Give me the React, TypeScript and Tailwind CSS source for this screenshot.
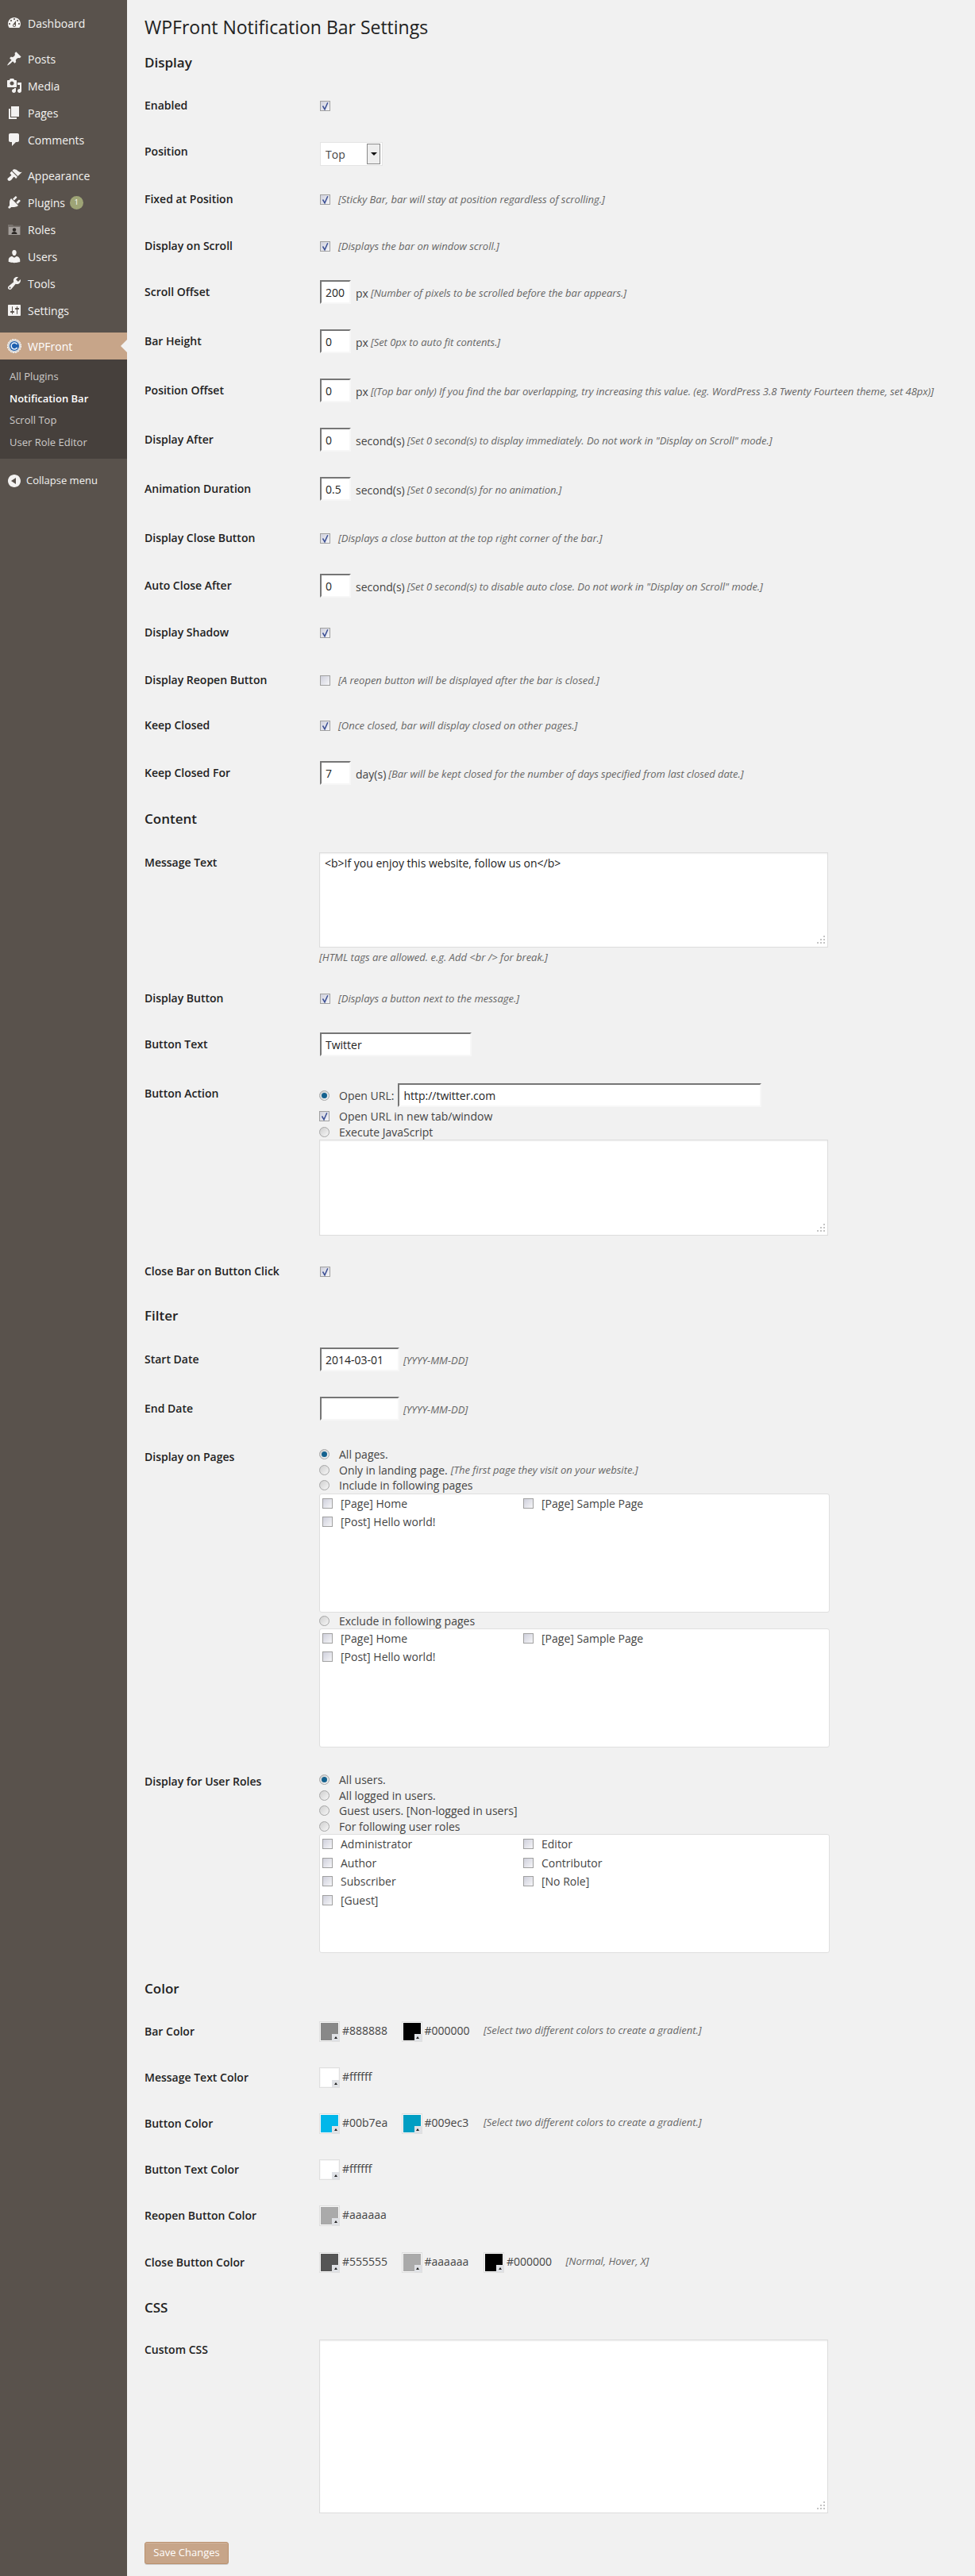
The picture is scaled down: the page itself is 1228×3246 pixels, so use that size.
import React from 'react';

const ICONS: Record<string, string> = {
  dashboard: 'M3.76 16h12.48c1.1-1.37 1.76-3.11 1.76-5 0-4.42-3.58-8-8-8s-8 3.58-8 8c0 1.89.66 3.63 1.76 5zM10 4c.55 0 1 .45 1 1s-.45 1-1 1-1-.45-1-1 .45-1 1-1zM6 6c.55 0 1 .45 1 1s-.45 1-1 1-1-.45-1-1 .45-1 1-1zm8 0c.55 0 1 .45 1 1s-.45 1-1 1-1-.45-1-1 .45-1 1-1zm-5.37 5.55L12 7v6c0 1.1-.9 2-2 2s-2-.9-2-2c0-.57.24-1.08.63-1.45zM4 10c.55 0 1 .45 1 1s-.45 1-1 1-1-.45-1-1 .45-1 1-1zm12 0c.55 0 1 .45 1 1s-.45 1-1 1-1-.45-1-1 .45-1 1-1zm-5 3c0-.55-.45-1-1-1s-1 .45-1 1 .45 1 1 1 1-.45 1-1z',
  posts: 'M10.44 3.02l1.82-1.82 6.36 6.35-1.83 1.82c-1.05-.68-2.48-.57-3.41.36l-.75.75c-.92.93-1.04 2.35-.35 3.41l-1.83 1.82-2.41-2.41-2.8 2.79c-.42.42-3.38 2.71-3.8 2.29s1.86-3.39 2.28-3.81l2.79-2.79L4.1 9.36l1.83-1.82c1.05.69 2.48.57 3.4-.36l.75-.75c.93-.92 1.05-2.35.36-3.41z',
  media: 'M13 11V4c0-.55-.45-1-1-1h-1.67L9 1H5L3.67 3H2c-.55 0-1 .45-1 1v7c0 .55.45 1 1 1h10c.55 0 1-.45 1-1zM7 4.5c1.38 0 2.5 1.12 2.5 2.5S8.38 9.5 7 9.5 4.5 8.38 4.5 7 5.62 4.5 7 4.5zM14 6h5v10.5c0 1.38-1.12 2.5-2.5 2.5S14 17.88 14 16.5s1.12-2.5 2.5-2.5c.17 0 .34.02.5.05V9h-3V6zm-4 8.05V13h2v3.5c0 1.38-1.12 2.5-2.5 2.5S7 17.88 7 16.5 8.12 14 9.5 14c.17 0 .34.02.5.05z',
  pages: 'M6 15V2h10v13H6zm-1 1h8v2H3V5h2v11z',
  comments: 'M5 2h9c1.1 0 2 .9 2 2v7c0 1.1-.9 2-2 2h-2l-5 5v-5H5c-1.1 0-2-.9-2-2V4c0-1.1.9-2 2-2z',
  appearance: 'M14.48 11.06L7.41 3.99l1.5-1.5c.5-.56 2.3-.47 3.51.32 1.21.8 1.43 1.28 2.91 2.1 1.18.64 2.45 1.26 4.45.85zm-.71.71L6.7 4.7 4.93 6.47c-.39.39-.39 1.02 0 1.41l1.06 1.06c.39.39.39 1.03 0 1.42-.6.6-1.43 1.11-2.21 1.69-.35.26-.7.53-1.01.84C1.43 13.23.93 15 2.14 16.21c1.21 1.22 2.98.71 4.32-.63.31-.31.58-.66.84-1.01.58-.78 1.09-1.61 1.69-2.21.39-.39 1.03-.39 1.42 0l1.06 1.06c.39.39 1.02.39 1.41 0z',
  plugins: 'M13.11 4.36L9.87 7.6 8 5.73l3.24-3.24c.35-.34 1.05-.2 1.56.32.52.51.66 1.21.31 1.55zm-8 1.77l.91-1.12 9.01 9.01-1.19.84c-.71.71-2.63 1.16-3.82 1.16H6.14L4.9 17.26c-.59.59-1.54.59-2.12 0-.59-.58-.59-1.53 0-2.12l1.24-1.24v-3.88c0-1.13.4-3.19 1.09-3.89zm7.26 3.97l3.24-3.24c.34-.35 1.04-.21 1.55.31.52.51.66 1.21.31 1.55l-3.24 3.25z',
  users: 'M10 9.25c-2.27 0-2.73-3.44-2.73-3.44C7 4.02 7.82 2 9.97 2c2.16 0 2.98 2.02 2.71 3.81 0 0-.41 3.44-2.68 3.44zm0 2.57L12.72 10c2.39 0 4.52 2.33 4.52 4.53v2.49s-3.65 1.13-7.24 1.13c-3.65 0-7.24-1.13-7.24-1.13v-2.49c0-2.25 1.94-4.53 4.47-4.53z',
  tools: 'M16.68 9.77c-1.34 1.34-3.3 1.67-4.95.99l-5.41 6.52c-.99.99-2.59.99-3.58 0s-.99-2.59 0-3.57l6.52-5.42c-.68-1.65-.35-3.61.99-4.95 1.28-1.28 3.12-1.62 4.72-1.06l-2.89 2.89 2.82 2.82 2.86-2.87c.53 1.58.18 3.39-1.08 4.65zM3.81 16.21c.4.39 1.04.39 1.43 0 .4-.4.4-1.04 0-1.43-.39-.4-1.03-.4-1.43 0-.39.39-.39 1.03 0 1.43z',
  settings: 'M18 16V4c0-.55-.45-1-1-1H3c-.55 0-1 .45-1 1v12c0 .55.45 1 1 1h14c.55 0 1-.45 1-1zM8 11h1c.55 0 1 .45 1 1s-.45 1-1 1H8v1.5c0 .28-.22.5-.5.5s-.5-.22-.5-.5V13H6c-.55 0-1-.45-1-1s.45-1 1-1h1V5.500c0-.28.22-.5.5-.5s.5.22.5.5V11zm5-2h-1c-.55 0-1-.45-1-1s.45-1 1-1h1V5.500c0-.28.22-.5.5-.5s.5.22.5.5V7h1c.55 0 1 .45 1 1s-.45 1-1 1h-1v5.500c0 .28-.22.5-.5.5s-.5-.22-.5-.5V9z',
  collapse: 'M10 2c-4.420 0-8 3.580-8 8s3.580 8 8 8 8-3.580 8-8-3.580-8-8-8zm2 12l-6-4 6-4v8z',
};

function MenuIcon({ name }: { name: string }) {
  return (
    <svg viewBox="0 0 20 20" className="h-5 w-5 shrink-0 text-[#f3f2f1]" fill="currentColor">
      <path d={ICONS[name]} />
    </svg>
  );
}

function RolesIcon() {
  return (
    <svg viewBox="0 0 16 16" className="ml-[2px] mr-[2px] h-4 w-4 shrink-0">
      <path d="M0 2h6l1 1.500h9V15H0z" fill="#77716c" />
      <rect x="1" y="5" width="14" height="10" fill="#a39e9a" />
      <circle cx="8" cy="8.500" r="2.200" fill="#2c2825" />
      <path d="M4.500 14c0-2 1.500-3 3.500-3s3.500 1 3.500 3z" fill="#2c2825" />
    </svg>
  );
}

function GearIcon() {
  return (
    <svg viewBox="0 0 18 18" className="ml-px mr-px h-[18px] w-[18px] shrink-0">
      <circle cx="9" cy="9" r="8.600" fill="#d9d9d9" strokeDasharray="2 1.400" stroke="#ffffff" strokeWidth="1" />
      <circle cx="9" cy="9" r="6" fill="#1d5fae" />
      <path d="M12.500 6.800A4 4 0 1 0 12.600 11" fill="none" stroke="#eaf2fb" strokeWidth="1.500" />
    </svg>
  );
}

function MenuItem({ icon, label, badge }: { icon: string; label: string; badge?: string }) {
  return (
    <div className="flex h-[34px] items-center gap-[7px] pl-[8px] text-[14px] text-[#f3f2f1]">
      {icon === 'roles' ? <RolesIcon /> : <MenuIcon name={icon} />}
      <span>{label}</span>
      {badge && (
        <span className="ml-[-1px] flex h-[17px] w-[17px] items-center justify-center rounded-full bg-[#9ea476] text-[9px] text-white">
          {badge}
        </span>
      )}
    </div>
  );
}

function Sidebar() {
  return (
    <aside className="w-40 shrink-0 bg-[#59524c] pt-3">
      <MenuItem icon="dashboard" label="Dashboard" />
      <div className="mt-[11px]">
        <MenuItem icon="posts" label="Posts" />
        <MenuItem icon="media" label="Media" />
        <MenuItem icon="pages" label="Pages" />
        <MenuItem icon="comments" label="Comments" />
      </div>
      <div className="mt-[11px]">
        <MenuItem icon="appearance" label="Appearance" />
        <MenuItem icon="plugins" label="Plugins" badge="1" />
        <MenuItem icon="roles" label="Roles" />
        <MenuItem icon="users" label="Users" />
        <MenuItem icon="tools" label="Tools" />
        <MenuItem icon="settings" label="Settings" />
      </div>
      <div className="relative mt-[11px] flex h-[34px] items-center gap-[7px] bg-[#c7a589] pl-[8px] text-[14px] text-white">
        <GearIcon />
        <span>WPFront</span>
        <span className="absolute right-0 top-[9px] border-y-[8px] border-r-[8px] border-y-transparent border-r-[#f1f1f1]" />
      </div>
      <div className="h-[125px] bg-[#46403c] pt-[8px] text-[13px] text-[#cdcbc9]">
        <div className="flex h-[27.5px] items-center pl-3">All Plugins</div>
        <div className="flex h-[27.5px] items-center pl-3 font-semibold text-white">Notification Bar</div>
        <div className="flex h-[27.5px] items-center pl-3">Scroll Top</div>
        <div className="flex h-[27.5px] items-center pl-3">User Role Editor</div>
      </div>
      <div className="mt-[18px] flex h-5 items-center gap-[5px] pl-[8px] text-[13px] text-[#f3f2f1]">
        <MenuIcon name="collapse" />
        <span>Collapse menu</span>
      </div>
    </aside>
  );
}

function Heading({ children, className }: { children: React.ReactNode; className: string }) {
  return <h3 className={`text-[17px] leading-6 font-semibold text-[#222] ${className}`}>{children}</h3>;
}

function Row({
  label,
  height,
  inline = true,
  labelClass = 'pt-4',
  valueClass = '',
  children,
}: {
  label: string;
  height: string;
  inline?: boolean;
  labelClass?: string;
  valueClass?: string;
  children?: React.ReactNode;
}) {
  return (
    <div className={`flex ${height}`}>
      <div className={`w-[221px] shrink-0 text-[14px] leading-5 font-semibold text-[#222] ${labelClass}`}>{label}</div>
      <div className={`min-w-0 flex-1 ${inline ? 'mt-4 flex h-5 items-center' : ''} ${valueClass}`}>{children}</div>
    </div>
  );
}

function Hint({ children, className = '' }: { children: React.ReactNode; className?: string }) {
  return <span className={`text-[13px] whitespace-nowrap text-[#666] italic ${className}`}>{children}</span>;
}

function Check({ on = false }: { on?: boolean }) {
  return (
    <span className="relative block h-[13px] w-[13px] shrink-0 border border-[#a0a0a0] bg-gradient-to-br from-[#cfd0dc] to-[#f6f6f8]">
      {on && (
        <svg viewBox="0 0 13 13" className="absolute -left-px -top-px h-[13px] w-[13px]">
          <path d="M3.500 6.500L6 10.800 9.800 2.200" fill="none" stroke="#3b4f94" strokeWidth="1.500" />
        </svg>
      )}
    </span>
  );
}

function Radio({ on = false }: { on?: boolean }) {
  return (
    <span className="flex h-[13px] w-[13px] shrink-0 items-center justify-center rounded-full border border-[#a6a6a6] bg-gradient-to-br from-[#cfcfcf] to-[#f7f7f7]">
      {on && <span className="h-[7px] w-[7px] rounded-full bg-[#15628f]" />}
    </span>
  );
}

function TextInput({ value, className }: { value: string; className: string }) {
  return (
    <input
      readOnly
      value={value}
      className={`h-[30px] shrink-0 border-2 border-t-[#767676] border-r-[#f7f7f7] border-b-[#f7f7f7] border-l-[#767676] bg-white px-[5px] text-[14px] text-[#222] outline-none ${className}`}
    />
  );
}

function CheckRow({ on, hint }: { on: boolean; hint?: string }) {
  return (
    <>
      <Check on={on} />
      {hint && <Hint className="ml-[10px] mt-[2px]">{hint}</Hint>}
    </>
  );
}

function NumRow({ value, unit, hint }: { value: string; unit: string; hint: string }) {
  return (
    <>
      <TextInput value={value} className="w-[39px]" />
      <span className="ml-[6px] mt-[3px] text-[14px] text-[#444]">{unit}</span>
      <Hint className="ml-[3px] mt-[3px] tracking-[-0.04px]">{hint}</Hint>
    </>
  );
}

// textarea with the dotted resize grip of the old admin theme
function Area({ className, value = '' }: { className: string; value?: string }) {
  return (
    <div className={`relative -ml-px w-[641px] ${className}`}>
      <textarea
        readOnly
        value={value}
        className="block h-full w-full resize-none border border-[#dddddd] bg-white px-[6px] py-[3px] text-[14px] leading-5 text-[#222] shadow-[inset_0_1px_2px_rgba(0,0,0,0.07)] outline-none"
      />
      <svg viewBox="0 0 12 12" className="absolute bottom-[3px] right-[3px] h-3 w-3" fill="#c4c4c4">
        <rect x="9" y="0" width="2" height="2" />
        <rect x="9" y="4" width="2" height="2" />
        <rect x="5" y="4" width="2" height="2" />
        <rect x="9" y="8" width="2" height="2" />
        <rect x="5" y="8" width="2" height="2" />
        <rect x="1" y="8" width="2" height="2" />
      </svg>
    </div>
  );
}

function Option({ on, className, children }: { on?: boolean; className: string; children: React.ReactNode }) {
  return (
    <div className={`flex items-center text-[14px] text-[#444] ${className}`}>
      <span className="-ml-px mr-[12px]">
        <Radio on={on} />
      </span>
      {children}
    </div>
  );
}

function CheckBox({ items }: { items: string[] }) {
  return (
    <div className="-ml-px h-[150px] w-[643px] rounded-[3px] border border-[#dfdfdf] bg-white pl-[3px]">
      <div className="grid grid-cols-[253px_253px]">
        {items.map((item) => (
          <div key={item} className="flex h-[23.5px] items-center gap-[10px] text-[14px] text-[#444]">
            <Check />
            <span>{item}</span>
          </div>
        ))}
      </div>
    </div>
  );
}

function Swatch({ color, text }: { color: string; text: string }) {
  return (
    <div className="flex w-[103.5px] shrink-0 items-center">
      <span className="relative block h-[26px] w-[26px] shrink-0 border border-[#dfdfdf] bg-[#f7f7f7] p-px">
        <span className="block h-[22px] w-[22px]" style={{ background: color }} />
        <span className="absolute bottom-0 right-0 flex h-[9px] w-[9px] items-center justify-center bg-[#dfe1e5]">
          <span className="border-x-[2px] border-b-[3px] border-x-transparent border-b-[#222]" />
        </span>
      </span>
      <span className="ml-[3px] -mt-[3px] text-[14px] text-[#444]">{text}</span>
    </div>
  );
}

function ColorRow({ label, colors, hint }: { label: string; colors: [string, string][]; hint?: string }) {
  return (
    <Row label={label} height="h-[58px]" valueClass="-ml-px">
      {colors.map(([c, t]) => (
        <Swatch key={t} color={c} text={t} />
      ))}
      {hint && <Hint className="-mt-[2px]">{hint}</Hint>}
    </Row>
  );
}

export default function App() {
  return (
    <div className="flex min-h-[3246px] bg-[#f1f1f1] font-['Open_Sans',sans-serif] text-[#444]">
      <Sidebar />
      <main className="flex-1 pl-[22px] pt-[19px]">
        <h2 className="text-[23px] leading-[30px] font-normal text-[#222]">WPFront Notification Bar Settings</h2>

        <Heading className="mb-4 mt-[18px]">Display</Heading>
        <Row label="Enabled" height="h-[58px]"><CheckRow on /></Row>
        <Row label="Position" height="h-[60px]">
          <span className="mt-[6px] flex h-[30px] w-[79px] items-center justify-between border border-[#e4e4e4] bg-white pl-[6px] pr-[2px] text-[14px] text-[#444]">
            Top
            <span className="flex h-[26px] w-[17px] items-center justify-center border border-[#8a8a8a] bg-[#eeeeee]">
              <span className="border-x-[4px] border-t-[4px] border-x-transparent border-t-[#111]" />
            </span>
          </span>
        </Row>
        <Row label="Fixed at Position" height="h-[59px]"><CheckRow on hint="[Sticky Bar, bar will stay at position regardless of scrolling.]" /></Row>
        <Row label="Display on Scroll" height="h-[58px]"><CheckRow on hint="[Displays the bar on window scroll.]" /></Row>
        <Row label="Scroll Offset" height="h-[62px]"><NumRow value="200" unit="px" hint="[Number of pixels to be scrolled before the bar appears.]" /></Row>
        <Row label="Bar Height" height="h-[62px]"><NumRow value="0" unit="px" hint="[Set 0px to auto fit contents.]" /></Row>
        <Row label="Position Offset" height="h-[62px]"><NumRow value="0" unit="px" hint="[(Top bar only) If you find the bar overlapping, try increasing this value. (eg. WordPress 3.8 Twenty Fourteen theme, set 48px)]" /></Row>
        <Row label="Display After" height="h-[62px]"><NumRow value="0" unit="second(s)" hint={'[Set 0 second(s) to display immediately. Do not work in "Display on Scroll" mode.]'} /></Row>
        <Row label="Animation Duration" height="h-[62px]"><NumRow value="0.5" unit="second(s)" hint="[Set 0 second(s) for no animation.]" /></Row>
        <Row label="Display Close Button" height="h-[60px]"><CheckRow on hint="[Displays a close button at the top right corner of the bar.]" /></Row>
        <Row label="Auto Close After" height="h-[59px]"><NumRow value="0" unit="second(s)" hint={'[Set 0 second(s) to disable auto close. Do not work in "Display on Scroll" mode.]'} /></Row>
        <Row label="Display Shadow" height="h-[60px]"><CheckRow on /></Row>
        <Row label="Display Reopen Button" height="h-[57px]"><CheckRow on={false} hint="[A reopen button will be displayed after the bar is closed.]" /></Row>
        <Row label="Keep Closed" height="h-[60px]"><CheckRow on hint="[Once closed, bar will display closed on other pages.]" /></Row>
        <Row label="Keep Closed For" height="h-[62px]"><NumRow value="7" unit="day(s)" hint="[Bar will be kept closed for the number of days specified from last closed date.]" /></Row>

        <Heading className="mb-[17px] mt-[10px]">Content</Heading>
        <Row label="Message Text" height="h-[172px]" inline={false} valueClass="pt-[13px]">
          <Area className="h-[120px]" value="<b>If you enjoy this website, follow us on</b>" />
          <div className="-ml-px mt-[1px] leading-5"><Hint>{'[HTML tags are allowed. e.g. Add <br /> for break.]'}</Hint></div>
        </Row>
        <Row label="Display Button" height="h-[57px]" labelClass="pt-[15px]" valueClass="-translate-y-px"><CheckRow on hint="[Displays a button next to the message.]" /></Row>
        <Row label="Button Text" height="h-[63px]"><TextInput value="Twitter" className="w-[191px]" /></Row>
        <Row label="Button Action" height="h-[224px]" inline={false} labelClass="pt-[15px]" valueClass="pt-[12px]">
          <Option on className="h-[30px]">
            <span>Open URL:</span>
            <TextInput value="http://twitter.com" className="ml-[5px] w-[458px]" />
          </Option>
          <div className="mt-px flex h-5 items-center text-[14px] text-[#444]">
            <span className="-ml-px mr-[12px]"><Check on /></span>
            Open URL in new tab/window
          </div>
          <Option className="h-5">Execute JavaScript</Option>
          <Area className="h-[121px]" />
        </Row>
        <Row label="Close Bar on Button Click" height="h-[58px]" labelClass="pt-[15px]" valueClass="-translate-y-px"><CheckRow on /></Row>

        <Heading className="mb-[17px] mt-[11px]">Filter</Heading>
        <Row label="Start Date" height="h-[62px]">
          <TextInput value="2014-03-01" className="w-[100px]" />
          <Hint className="ml-[5px] mt-[3px] text-[12px]">[YYYY-MM-DD]</Hint>
        </Row>
        <Row label="End Date" height="h-[62px]">
          <TextInput value="" className="w-[100px]" />
          <Hint className="ml-[5px] mt-[3px] text-[12px]">[YYYY-MM-DD]</Hint>
        </Row>
        <Row label="Display on Pages" height="h-[408px]" inline={false} labelClass="pt-[15px]" valueClass="pt-[12px]">
          <Option on className="h-[19.5px]">All pages.</Option>
          <Option className="h-[19.5px]">
            <span>Only in landing page.</span>
            <Hint className="ml-1 text-[13px]">[The first page they visit on your website.]</Hint>
          </Option>
          <Option className="h-[19.5px]">Include in following pages</Option>
          <CheckBox items={['[Page] Home', '[Page] Sample Page', '[Post] Hello world!']} />
          <Option className="mt-px h-5">Exclude in following pages</Option>
          <div className="-mt-px">
            <CheckBox items={['[Page] Home', '[Page] Sample Page', '[Post] Hello world!']} />
          </div>
        </Row>
        <Row label="Display for User Roles" height="h-[260px]" inline={false} valueClass="pt-[14px]">
          <Option on className="h-[19.5px]">All users.</Option>
          <Option className="h-[19.5px]">All logged in users.</Option>
          <Option className="h-[19.5px]">Guest users. [Non-logged in users]</Option>
          <Option className="h-[19.5px]">For following user roles</Option>
          <CheckBox items={['Administrator', 'Editor', 'Author', 'Contributor', 'Subscriber', '[No Role]', '[Guest]']} />
        </Row>

        <Heading className="mb-4 mt-[15px]">Color</Heading>
        <ColorRow label="Bar Color" colors={[['#888888', '#888888'], ['#000000', '#000000']]} hint="[Select two different colors to create a gradient.]" />
        <ColorRow label="Message Text Color" colors={[['#ffffff', '#ffffff']]} />
        <ColorRow label="Button Color" colors={[['#00b7ea', '#00b7ea'], ['#009ec3', '#009ec3']]} hint="[Select two different colors to create a gradient.]" />
        <ColorRow label="Button Text Color" colors={[['#ffffff', '#ffffff']]} />
        <div className="mb-px">
          <ColorRow label="Reopen Button Color" colors={[['#aaaaaa', '#aaaaaa']]} />
        </div>
        <ColorRow label="Close Button Color" colors={[['#555555', '#555555'], ['#aaaaaa', '#aaaaaa'], ['#000000', '#000000']]} hint="[Normal, Hover, X]" />

        <Heading className="mb-4 mt-[13px]">CSS</Heading>
        <Row label="Custom CSS" height="h-[267px]" inline={false} labelClass="pt-[15px]" valueClass="pt-[12px]">
          <Area className="h-[219px]" />
        </Row>
        <button className="h-[28px] w-[106px] rounded-[3px] border border-[#ba906d] bg-[#c7a589] text-[13px] text-white shadow-[inset_0_1px_0_rgba(255,255,255,0.2),0_1px_0_rgba(0,0,0,0.15)]">
          Save Changes
        </button>
      </main>
    </div>
  );
}
